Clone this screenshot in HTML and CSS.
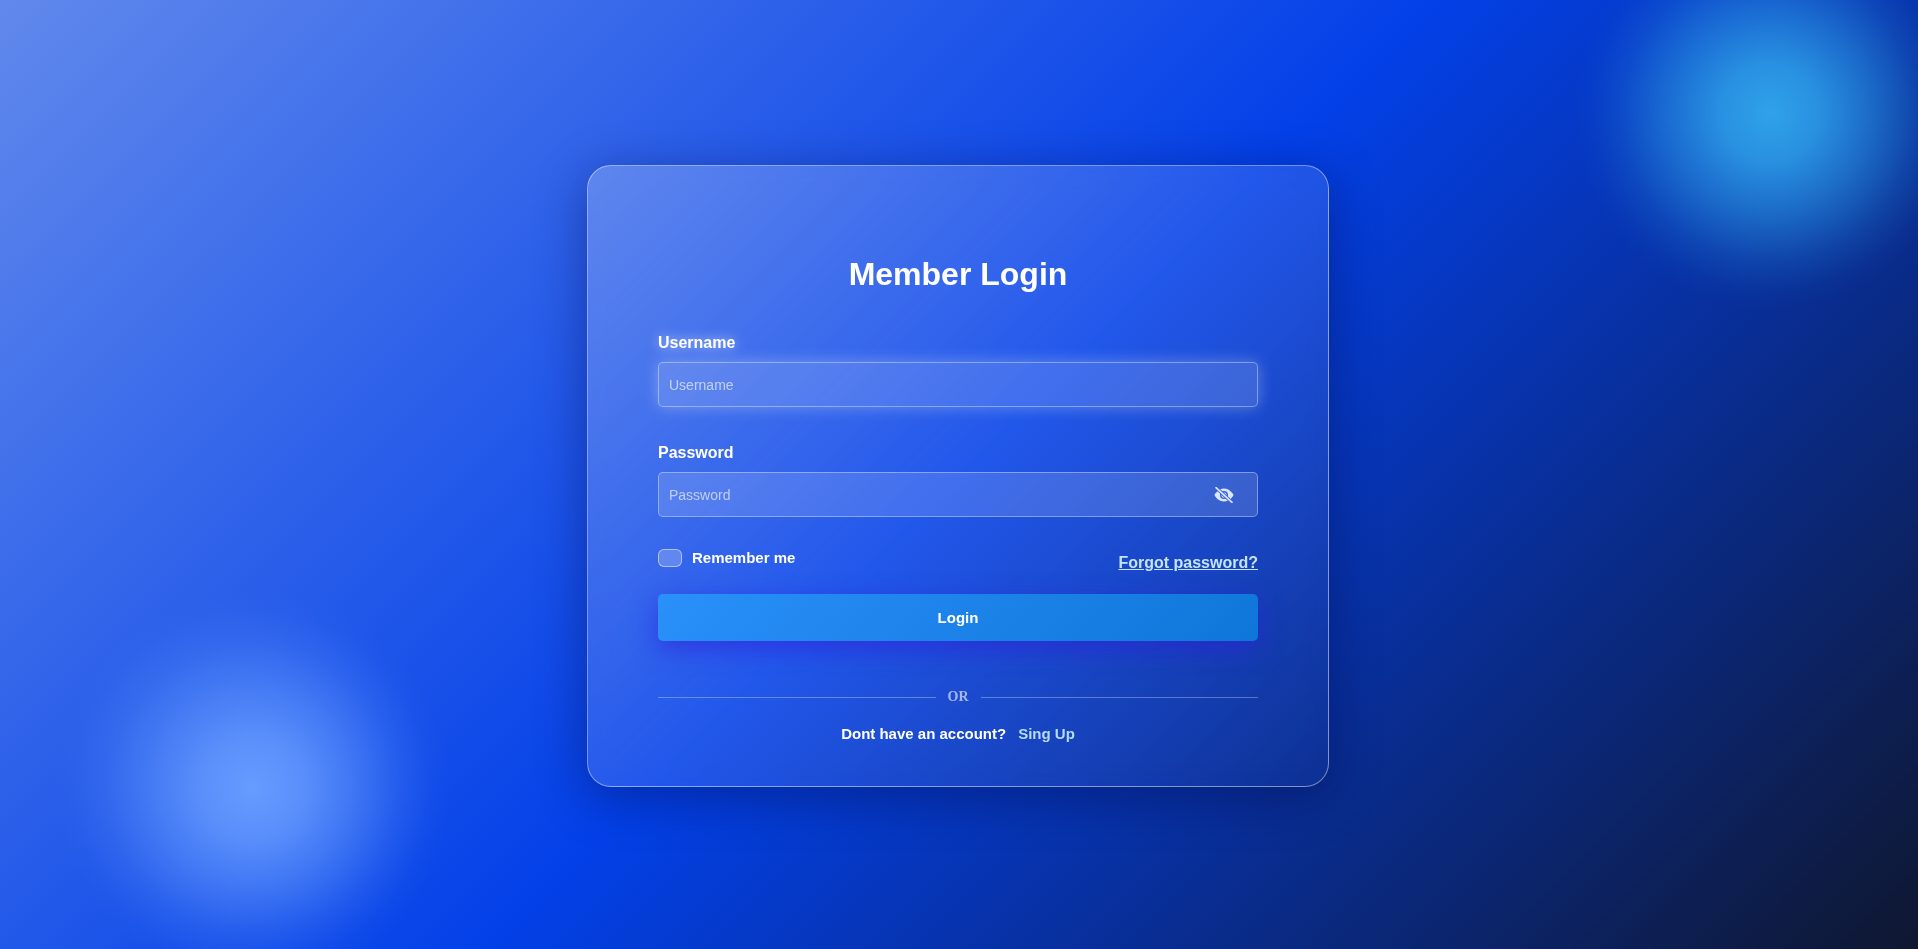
FILE: index.html
```html
<!DOCTYPE html>
<html lang="en">
<head>
<meta charset="utf-8">
<title>Member Login</title>
<link rel="stylesheet" href="styles.css">
</head>
<body>
<main class="card">
  <h1 class="title">Member Login</h1>
  <form class="form">
    <div class="field field-active">
      <label class="label" for="username">Username</label>
      <div class="control"><input class="input" id="username" placeholder="Username"></div>
    </div>
    <div class="field">
      <label class="label" for="password">Password</label>
      <div class="control">
        <input class="input" id="password" placeholder="Password">
        <svg class="eye" viewBox="0 0 20 16" width="20" height="16" aria-hidden="true">
          <path d="M10 1.500C5.500 1.500 2 5 .5 8c1.500 3 5 6.500 9.500 6.500S18 11 19.500 8C18 5 14.500 1.500 10 1.500Z" fill="currentColor"/>
          <circle cx="10" cy="8" r="3.300" fill="none" stroke="#3a62dc" stroke-width="1.500"/>
          <path d="M3 1.600 17 14.400" stroke="#3a62dc" stroke-width="3.400"/>
          <path d="M2 .7 18 15.300" stroke="currentColor" stroke-width="1.700" stroke-linecap="round"/>
        </svg>
      </div>
    </div>
    <div class="options">
      <label class="remember"><span class="check"></span>Remember me</label>
      <a class="forgot" href="#">Forgot password?</a>
    </div>
    <button class="login" type="button">Login</button>
    <div class="divider"><span>OR</span></div>
    <p class="signup">Dont have an account?<a href="#">Sing Up</a></p>
  </form>
</main>
</body>
</html>
```

FILE: styles.css
```css
* { box-sizing: border-box; }
html, body { height: 100%; margin: 0; }
body {
  display: flex;
  align-items: center;
  justify-content: center;
  overflow: hidden;
  font-family: "Liberation Sans", Arial, sans-serif;
  color: #fff;
  background:
    radial-gradient(circle 198px at 253px 788px, rgba(102,155,255,1) 0%, rgba(102,155,255,.84) 25%, rgba(102,155,255,.52) 50%, rgba(102,155,255,.18) 75%, rgba(102,155,255,.04) 90%, rgba(102,155,255,0) 100%),
    radial-gradient(circle 198px at 1770px 113px, rgba(47,162,234,1) 0%, rgba(47,162,234,.84) 25%, rgba(47,162,234,.52) 50%, rgba(47,162,234,.18) 75%, rgba(47,162,234,.04) 90%, rgba(47,162,234,0) 100%),
    linear-gradient(135deg, #6189ec 0%, #0340e8 50%, #0f1730 100%);
}
.card {
  width: 742px;
  height: 622px;
  margin: 3px 2px 0 0;
  padding: 90px 70px 0;
  border: 1px solid rgba(255,255,255,.42);
  border-radius: 24px;
  background: linear-gradient(135deg, rgba(255,255,255,.23) 0%, rgba(255,255,255,.02) 100%);
  backdrop-filter: blur(10px);
  box-shadow: 0 10px 50px rgba(0,10,70,.42);
}
.title {
  margin: 0 0 41px;
  font-size: 32px;
  line-height: 37px;
  font-weight: 700;
  text-align: center;
}
.field { margin-bottom: 37px; }
.label {
  display: block;
  margin-bottom: 10px;
  font-size: 16px;
  line-height: 18px;
  font-weight: 700;
}
.field-active .label { text-shadow: 0 0 12px rgba(255,255,255,.7); }
.control { position: relative; }
.input {
  display: block;
  width: 100%;
  height: 45px;
  padding: 0 10px;
  border: 1px solid rgba(255,255,255,.36);
  border-radius: 5px;
  background: rgba(255,255,255,.14);
  color: #fff;
  font: 14px "Liberation Sans", Arial, sans-serif;
  outline: none;
}
.input::placeholder { color: rgba(255,255,255,.62); opacity: 1; }
.field-active .input { box-shadow: 0 0 15px rgba(255,255,255,.3); }
.eye {
  position: absolute;
  right: 24px;
  top: 15px;
  color: #dbe6ff;
}
.options {
  display: flex;
  justify-content: space-between;
  align-items: flex-start;
  margin-top: -5px;
}
.remember {
  display: flex;
  align-items: center;
  font-size: 15px;
  line-height: 18px;
  font-weight: 700;
}
.check {
  width: 24px;
  height: 18px;
  margin-right: 10px;
  border: 1px solid rgba(255,255,255,.5);
  border-radius: 6px;
  background: rgba(255,255,255,.22);
}
.forgot {
  margin-top: 5px;
  font-size: 16px;
  line-height: 18px;
  font-weight: 700;
  color: #c4e4fc;
  text-decoration: underline;
}
.login {
  display: block;
  width: 100%;
  height: 47px;
  margin-top: 22px;
  border: 0;
  border-radius: 5px;
  background: linear-gradient(135deg, #2a90fa 0%, #0f76d9 100%);
  box-shadow: 0 8px 24px rgba(50,30,220,.6);
  color: #fff;
  font: 700 15px "Liberation Sans", Arial, sans-serif;
}
.divider {
  display: flex;
  align-items: center;
  gap: 12px;
  margin-top: 48px;
  font-family: "Liberation Serif", serif;
  font-size: 14px;
  line-height: 16px;
  font-weight: 700;
  color: rgba(255,255,255,.6);
}
.divider::before, .divider::after {
  content: "";
  flex: 1;
  height: 1px;
  background: rgba(255,255,255,.3);
}
.signup {
  margin: 20px 0 0;
  text-align: center;
  font-size: 15px;
  line-height: 18px;
  font-weight: 700;
}
.signup a {
  margin-left: 12px;
  color: #b4dcfa;
  text-decoration: none;
}
```
